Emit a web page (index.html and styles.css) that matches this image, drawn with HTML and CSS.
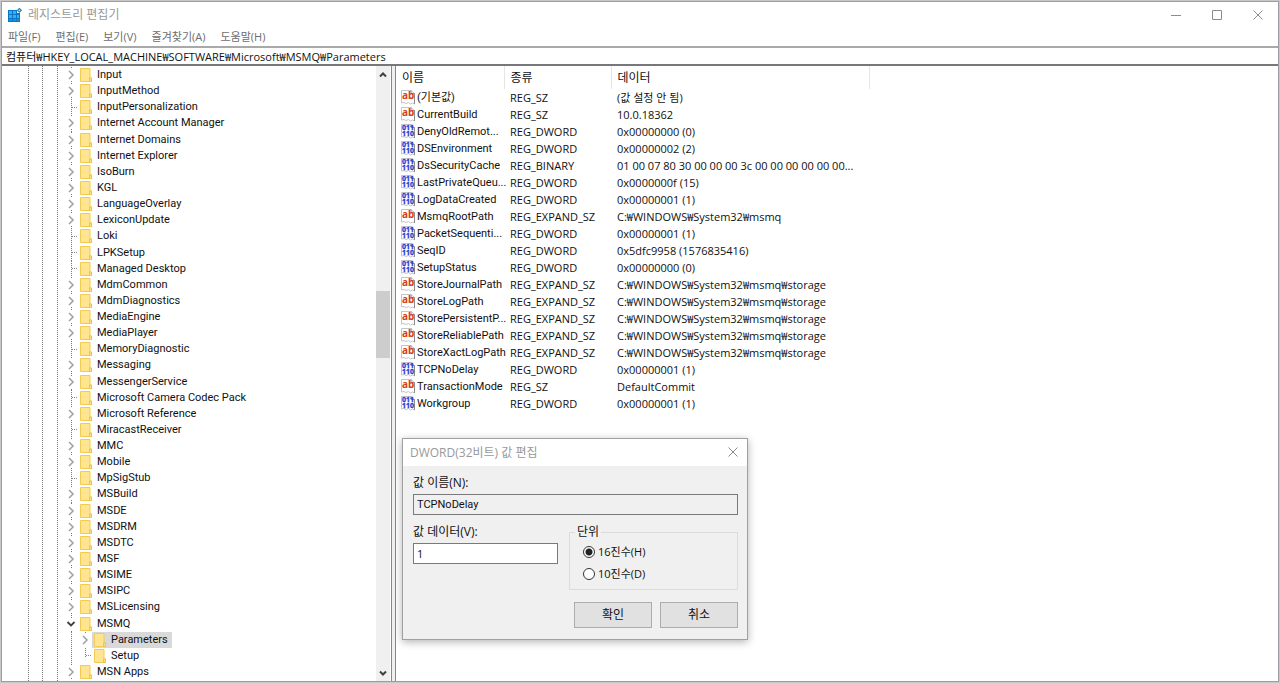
FILE: index.html
```html
<!DOCTYPE html>
<html lang="ko">
<head>
<meta charset="utf-8">
<title>레지스트리 편집기</title>
<link rel="stylesheet" href="styles.css">
</head>
<body>
<svg class="sprite" aria-hidden="true">
  <symbol id="folder" viewBox="0 0 12 14">
    <path d="M.5.5h9.500v9.500h1.500v3.500H.5z" fill="#ffe590" stroke="#f2cb55"/>
    <path d="M9.500 13.500v-3.500h2v3.500z" fill="#ffe08a" stroke="#eabf3d" stroke-width=".8"/>
  </symbol>
  <symbol id="closed" viewBox="0 0 8 10"><path d="M2 1l4 4-4 4" fill="none" stroke="#a0a0a0" stroke-width="1.500"/></symbol>
  <symbol id="open" viewBox="0 0 10 8"><path d="M1.500 2l3.500 3.500L8.500 2" fill="none" stroke="#404040" stroke-width="1.800"/></symbol>
  <symbol id="page" viewBox="0 0 14 15">
    <path d="M.5.5h9.500l3.500 3v10.500l-2-1-2 1-2-1.500-2.500 1-2-1-2.500.5z" fill="#fff" stroke="#c4c4c4"/>
    <path d="M10 .5v3h3.500v10.500" fill="none" stroke="#8c8c8c"/>
  </symbol>
  <symbol id="str" viewBox="0 0 14 15"><use href="#page"/><text x="1" y="9" font-size="10" fill="#d5401c" class="glyph">ab</text></symbol>
  <symbol id="bin" viewBox="0 0 14 15"><use href="#page"/><text x="1" y="6" font-size="7" fill="#1c3fd0" stroke="#1c3fd0" stroke-width=".3" class="glyph">011</text><text x="1" y="12" font-size="7" fill="#1c3fd0" stroke="#1c3fd0" stroke-width=".3" class="glyph">110</text></symbol>
</svg>
<div class="window">
  <header class="titlebar">
    <svg class="appicon" viewBox="0 0 14 14">
      <path d="M0 2h9v3h3v9H0z" fill="#0b76c8"/>
      <path d="M1 3h3v3H1zM5 3h3v3H5zM1 7h3v3H1zM5 7h3v3H5zM9 7h2v3H9z" fill="#35aef5"/>
      <path d="M1 11h3v2H1zM5 11h3v2H5zM9 11h2v2H9z" fill="#1791e3"/>
      <path d="M11.400-.3L14 2.300 11.400 4.900 8.800 2.300z" fill="#2077bd"/><path d="M11.400 1.200l1.100 1.100-1.100 1.100-1.100-1.100z" fill="#b8e2fb"/>
    </svg>
    <h1 class="title">레지스트리 편집기</h1>
    <div class="controls">
      <button class="ctl" aria-label="최소화"><svg viewBox="0 0 10 10"><path d="M0 5.500h10"/></svg></button>
      <button class="ctl" aria-label="최대화"><svg viewBox="0 0 10 10"><path d="M.5.5h9v9h-9z"/></svg></button>
      <button class="ctl" aria-label="닫기"><svg viewBox="0 0 10 10"><path d="M.5.5l9 9M9.500.5l-9 9"/></svg></button>
    </div>
  </header>
  <nav class="menu">
    <button>파일(F)</button><button>편집(E)</button><button>보기(V)</button><button>즐겨찾기(A)</button><button>도움말(H)</button>
  </nav>
  <input class="address" aria-label="주소" value="컴퓨터₩HKEY_LOCAL_MACHINE₩SOFTWARE₩Microsoft₩MSMQ₩Parameters">
  <main class="panes">
    <section class="treepane">
      <ul class="tree">
        <li><svg class="tw"><use href="#closed"/></svg><svg class="fd"><use href="#folder"/></svg><span>Input</span></li>
        <li><svg class="tw"><use href="#closed"/></svg><svg class="fd"><use href="#folder"/></svg><span>InputMethod</span></li>
        <li class="leaf"><svg class="fd"><use href="#folder"/></svg><span>InputPersonalization</span></li>
        <li><svg class="tw"><use href="#closed"/></svg><svg class="fd"><use href="#folder"/></svg><span>Internet Account Manager</span></li>
        <li><svg class="tw"><use href="#closed"/></svg><svg class="fd"><use href="#folder"/></svg><span>Internet Domains</span></li>
        <li><svg class="tw"><use href="#closed"/></svg><svg class="fd"><use href="#folder"/></svg><span>Internet Explorer</span></li>
        <li><svg class="tw"><use href="#closed"/></svg><svg class="fd"><use href="#folder"/></svg><span>IsoBurn</span></li>
        <li><svg class="tw"><use href="#closed"/></svg><svg class="fd"><use href="#folder"/></svg><span>KGL</span></li>
        <li><svg class="tw"><use href="#closed"/></svg><svg class="fd"><use href="#folder"/></svg><span>LanguageOverlay</span></li>
        <li><svg class="tw"><use href="#closed"/></svg><svg class="fd"><use href="#folder"/></svg><span>LexiconUpdate</span></li>
        <li class="leaf"><svg class="fd"><use href="#folder"/></svg><span>Loki</span></li>
        <li class="leaf"><svg class="fd"><use href="#folder"/></svg><span>LPKSetup</span></li>
        <li class="leaf"><svg class="fd"><use href="#folder"/></svg><span>Managed Desktop</span></li>
        <li><svg class="tw"><use href="#closed"/></svg><svg class="fd"><use href="#folder"/></svg><span>MdmCommon</span></li>
        <li><svg class="tw"><use href="#closed"/></svg><svg class="fd"><use href="#folder"/></svg><span>MdmDiagnostics</span></li>
        <li><svg class="tw"><use href="#closed"/></svg><svg class="fd"><use href="#folder"/></svg><span>MediaEngine</span></li>
        <li><svg class="tw"><use href="#closed"/></svg><svg class="fd"><use href="#folder"/></svg><span>MediaPlayer</span></li>
        <li class="leaf"><svg class="fd"><use href="#folder"/></svg><span>MemoryDiagnostic</span></li>
        <li><svg class="tw"><use href="#closed"/></svg><svg class="fd"><use href="#folder"/></svg><span>Messaging</span></li>
        <li><svg class="tw"><use href="#closed"/></svg><svg class="fd"><use href="#folder"/></svg><span>MessengerService</span></li>
        <li class="leaf"><svg class="fd"><use href="#folder"/></svg><span>Microsoft Camera Codec Pack</span></li>
        <li><svg class="tw"><use href="#closed"/></svg><svg class="fd"><use href="#folder"/></svg><span>Microsoft Reference</span></li>
        <li class="leaf"><svg class="fd"><use href="#folder"/></svg><span>MiracastReceiver</span></li>
        <li><svg class="tw"><use href="#closed"/></svg><svg class="fd"><use href="#folder"/></svg><span>MMC</span></li>
        <li><svg class="tw"><use href="#closed"/></svg><svg class="fd"><use href="#folder"/></svg><span>Mobile</span></li>
        <li class="leaf"><svg class="fd"><use href="#folder"/></svg><span>MpSigStub</span></li>
        <li><svg class="tw"><use href="#closed"/></svg><svg class="fd"><use href="#folder"/></svg><span>MSBuild</span></li>
        <li><svg class="tw"><use href="#closed"/></svg><svg class="fd"><use href="#folder"/></svg><span>MSDE</span></li>
        <li><svg class="tw"><use href="#closed"/></svg><svg class="fd"><use href="#folder"/></svg><span>MSDRM</span></li>
        <li><svg class="tw"><use href="#closed"/></svg><svg class="fd"><use href="#folder"/></svg><span>MSDTC</span></li>
        <li><svg class="tw"><use href="#closed"/></svg><svg class="fd"><use href="#folder"/></svg><span>MSF</span></li>
        <li><svg class="tw"><use href="#closed"/></svg><svg class="fd"><use href="#folder"/></svg><span>MSIME</span></li>
        <li><svg class="tw"><use href="#closed"/></svg><svg class="fd"><use href="#folder"/></svg><span>MSIPC</span></li>
        <li><svg class="tw"><use href="#closed"/></svg><svg class="fd"><use href="#folder"/></svg><span>MSLicensing</span></li>
        <li><svg class="tw"><use href="#open"/></svg><svg class="fd"><use href="#folder"/></svg><span>MSMQ</span></li>
        <li class="child"><svg class="tw"><use href="#closed"/></svg><div class="selected"><svg class="fd"><use href="#folder"/></svg><span>Parameters</span></div></li>
        <li class="child leaf last"><svg class="fd"><use href="#folder"/></svg><span>Setup</span></li>
        <li><svg class="tw"><use href="#closed"/></svg><svg class="fd"><use href="#folder"/></svg><span>MSN Apps</span></li>
      </ul>
      <div class="scrollbar">
        <button aria-label="위로"><svg viewBox="0 0 8 8"><path d="M1 5.500l3-3 3 3"/></svg></button>
        <div class="track"><div class="before"></div><div class="thumb"></div><div class="after"></div></div>
        <button aria-label="아래로"><svg viewBox="0 0 8 8"><path d="M1 2.500l3 3 3-3"/></svg></button>
      </div>
    </section>
    <section class="values">
      <table>
        <colgroup><col class="c-name"><col class="c-type"><col class="c-data"><col></colgroup>
        <thead><tr><th>이름</th><th>종류</th><th>데이터</th><td></td></tr></thead>
        <tbody>
          <tr><td><svg class="vi"><use href="#str"/></svg>(기본값)</td><td>REG_SZ</td><td>(값 설정 안 됨)</td></tr>
          <tr><td><svg class="vi"><use href="#str"/></svg>CurrentBuild</td><td>REG_SZ</td><td>10.0.18362</td></tr>
          <tr><td><svg class="vi"><use href="#bin"/></svg>DenyOldRemot...</td><td>REG_DWORD</td><td>0x00000000 (0)</td></tr>
          <tr><td><svg class="vi"><use href="#bin"/></svg>DSEnvironment</td><td>REG_DWORD</td><td>0x00000002 (2)</td></tr>
          <tr><td><svg class="vi"><use href="#bin"/></svg>DsSecurityCache</td><td>REG_BINARY</td><td>01 00 07 80 30 00 00 00 3c 00 00 00 00 00 00...</td></tr>
          <tr><td><svg class="vi"><use href="#bin"/></svg>LastPrivateQueu...</td><td>REG_DWORD</td><td>0x0000000f (15)</td></tr>
          <tr><td><svg class="vi"><use href="#bin"/></svg>LogDataCreated</td><td>REG_DWORD</td><td>0x00000001 (1)</td></tr>
          <tr><td><svg class="vi"><use href="#str"/></svg>MsmqRootPath</td><td>REG_EXPAND_SZ</td><td>C:₩WINDOWS₩System32₩msmq</td></tr>
          <tr><td><svg class="vi"><use href="#bin"/></svg>PacketSequenti...</td><td>REG_DWORD</td><td>0x00000001 (1)</td></tr>
          <tr><td><svg class="vi"><use href="#bin"/></svg>SeqID</td><td>REG_DWORD</td><td>0x5dfc9958 (1576835416)</td></tr>
          <tr><td><svg class="vi"><use href="#bin"/></svg>SetupStatus</td><td>REG_DWORD</td><td>0x00000000 (0)</td></tr>
          <tr><td><svg class="vi"><use href="#str"/></svg>StoreJournalPath</td><td>REG_EXPAND_SZ</td><td>C:₩WINDOWS₩System32₩msmq₩storage</td></tr>
          <tr><td><svg class="vi"><use href="#str"/></svg>StoreLogPath</td><td>REG_EXPAND_SZ</td><td>C:₩WINDOWS₩System32₩msmq₩storage</td></tr>
          <tr><td><svg class="vi"><use href="#str"/></svg>StorePersistentP...</td><td>REG_EXPAND_SZ</td><td>C:₩WINDOWS₩System32₩msmq₩storage</td></tr>
          <tr><td><svg class="vi"><use href="#str"/></svg>StoreReliablePath</td><td>REG_EXPAND_SZ</td><td>C:₩WINDOWS₩System32₩msmq₩storage</td></tr>
          <tr><td><svg class="vi"><use href="#str"/></svg>StoreXactLogPath</td><td>REG_EXPAND_SZ</td><td>C:₩WINDOWS₩System32₩msmq₩storage</td></tr>
          <tr><td><svg class="vi"><use href="#bin"/></svg>TCPNoDelay</td><td>REG_DWORD</td><td>0x00000001 (1)</td></tr>
          <tr><td><svg class="vi"><use href="#str"/></svg>TransactionMode</td><td>REG_SZ</td><td>DefaultCommit</td></tr>
          <tr><td><svg class="vi"><use href="#bin"/></svg>Workgroup</td><td>REG_DWORD</td><td>0x00000001 (1)</td></tr>
        </tbody>
      </table>
    </section>
  </main>
</div>
<form class="dialog" role="dialog" aria-labelledby="dlg-title">
  <div class="dlg-bar">
    <h2 class="title" id="dlg-title">DWORD(32비트) 값 편집</h2>
    <button type="button" class="dlg-close" aria-label="닫기"><svg viewBox="0 0 10 10"><path d="M.5.5l9 9M9.500.5l-9 9"/></svg></button>
  </div>
  <div class="dlg-body">
    <label for="vname">값 이름(N):</label>
    <input class="box" id="vname" value="TCPNoDelay" readonly>
    <div class="dlg-row">
      <div class="data">
        <label for="vdata">값 데이터(V):</label>
        <input class="box" id="vdata" value="1">
      </div>
      <fieldset>
        <legend>단위</legend>
        <label class="radio"><input type="radio" name="base" checked>16진수(H)</label>
        <label class="radio"><input type="radio" name="base">10진수(D)</label>
      </fieldset>
    </div>
    <div class="actions"><button type="button">확인</button><button type="button">취소</button></div>
  </div>
</form>
</body>
</html>
```
FILE: styles.css
```css
* { box-sizing: border-box; }
body, button, input { font-family: "Open Sans", "Noto Sans CJK KR", sans-serif; font-size: 11px; line-height: 16px; color: #111; }
body { margin: 0; position: relative; background: #e4e4e4; }
button { border: 0; background: none; padding: 0; }
.sprite { position: absolute; width: 0; height: 0; }
.glyph { font-family: "Noto Sans", sans-serif; font-weight: 700; }

.window { display: flex; flex-direction: column; min-height: 100vh; background: #fff; border: 2px solid #9b9ca4; border-top: 1px solid #e4e4e4; outline: 1px solid #c8c8c8; outline-offset: -1px; }
.titlebar { display: flex; align-items: center; height: 27px; padding: 0 0 1px 6px; border-top: 1px solid #a0a0a0; }
.appicon { width: 14px; height: 14px; overflow: visible; }
.title { margin: 0; font-size: 12px; font-weight: 400; color: #999; }
.titlebar .title { margin-left: 6px; }
.controls { display: flex; margin-left: auto; }
.ctl { width: 41px; height: 24px; display: grid; place-items: center; }
.ctl svg, .dlg-close svg { width: 10px; height: 10px; fill: none; stroke: #8c8c8c; }
.menu { display: flex; gap: 15px; height: 18px; padding-left: 6px; }
.menu button { color: #6d6d6d; }
.address { height: 20px; width: 100%; border: 0; border-top: 2px solid #a9a9a9; border-bottom: 2px solid #77777c; padding: 0 4px; outline: 0; }

.panes { flex: 1; display: flex; gap: 3px; background: #f0f0f0; }
.treepane { flex: none; width: 390px; display: flex; background: #fff; border-right: 1px solid #85868f; }
.tree, td:first-child, #vname { font-family: Roboto, "Noto Sans CJK KR", sans-serif; }
.tree {
  flex: 1; margin: 0; padding: 1px 0; list-style: none; display: grid; grid-auto-rows: 1fr;
  --dots: repeating-linear-gradient(#777 0 1px, transparent 1px 2px);
  background: var(--dots) 26px 0 / 1px 100% no-repeat, var(--dots) 40px 0 / 1px 100% no-repeat, var(--dots) 55px 0 / 1px 100% no-repeat;
}
.tree li { display: flex; align-items: center; min-height: 16px; padding-left: 64px; background: var(--dots) 69px 0 / 1px 100% no-repeat; }
.tree li.child { padding-left: 78px; background: var(--dots) 69px 0 / 1px 100% no-repeat, var(--dots) 83px 0 / 1px 4px no-repeat; }
.tree li.leaf::before { content: ""; width: 6px; height: 1px; margin: 0 2px 0 6px; background: repeating-linear-gradient(90deg, #888 0 1px, transparent 1px 2px); }
.tree li.last { background: var(--dots) 69px 0 / 1px 100% no-repeat, var(--dots) 83px 0 / 1px 9px no-repeat; }
.tw { width: 10px; height: 12px; margin-right: 4px; padding: 1px 0; background: #fff; }
.fd { width: 12px; height: 14px; }
.tree span { margin-left: 5px; }
.selected { display: flex; align-items: center; align-self: stretch; background: #d9d9d9; padding-right: 4px; margin-left: -2px; padding-left: 2px; }

.scrollbar { width: 14px; margin-right: 1px; display: flex; flex-direction: column; background: #f0f0f0; }
.scrollbar button { height: 17px; display: grid; place-items: center; }
.scrollbar svg { width: 8px; height: 8px; fill: none; stroke: #404040; stroke-width: 2; }
.track { flex: 1; display: flex; flex-direction: column; }
.before { flex: 208; }
.thumb { flex: 67; background: #cdcdcd; }
.after { flex: 305; }

.values { flex: 1; background: #fff; border-left: 1px solid #85868f; }
table { width: 100%; table-layout: fixed; border-collapse: collapse; }
.c-name { width: 108px; }
.c-type { width: 107px; }
.c-data { width: 258px; }
th, td { padding: 0 0 0 6px; height: 17px; line-height: 17px; font-weight: 400; text-align: left; vertical-align: top; white-space: nowrap; }
th { height: 23px; line-height: 23px; font-size: 12px; border-right: 1px solid #e5e5e5; }
td:first-child { padding-left: 5px; }
.vi { width: 14px; height: 15px; margin: 1px 2px 0 0; vertical-align: top; }

.dialog { position: absolute; left: 402px; top: 438px; width: 346px; border: 1px solid #a0a0a0; background: #f0f0f0; box-shadow: 0 2px 8px rgba(0, 0, 0, .3); }
.dlg-bar { display: flex; align-items: center; justify-content: space-between; height: 27px; padding: 0 9px 0 7px; background: #fff; }
.dlg-body { display: flex; flex-direction: column; padding: 9px 9px 11px 10px; font-size: 12px; }
.dlg-body label { display: block; }
.box { width: 100%; height: 21px; border: 1px solid #7a7a7a; padding: 0 3px; margin-top: 3px; background: #fff; outline: 0; }
.box[readonly] { background: #f0f0f0; }
.dlg-row { display: flex; gap: 11px; margin-top: 9px; }
.data { flex: none; width: 145px; }
fieldset { flex: 1; margin: 0; padding: 1px 13px 4px; border: 1px solid #dcdcdc; min-width: 0; }
legend { padding: 0 2px; margin-left: -8px; }
.dlg-body .radio { display: flex; align-items: center; height: 22px; gap: 3px; font-size: 11px; }
.radio input { appearance: none; width: 12px; height: 12px; margin: 0; border: 1px solid #333; border-radius: 50%; background: #fff; }
.radio input:checked { background: radial-gradient(circle, #222 0 3px, #fff 4px); }
.actions { display: flex; justify-content: flex-end; gap: 8px; margin-top: 12px; }
.actions button { width: 78px; height: 26px; border: 1px solid #adadad; background: #e1e1e1; font-size: 12px; }
```
